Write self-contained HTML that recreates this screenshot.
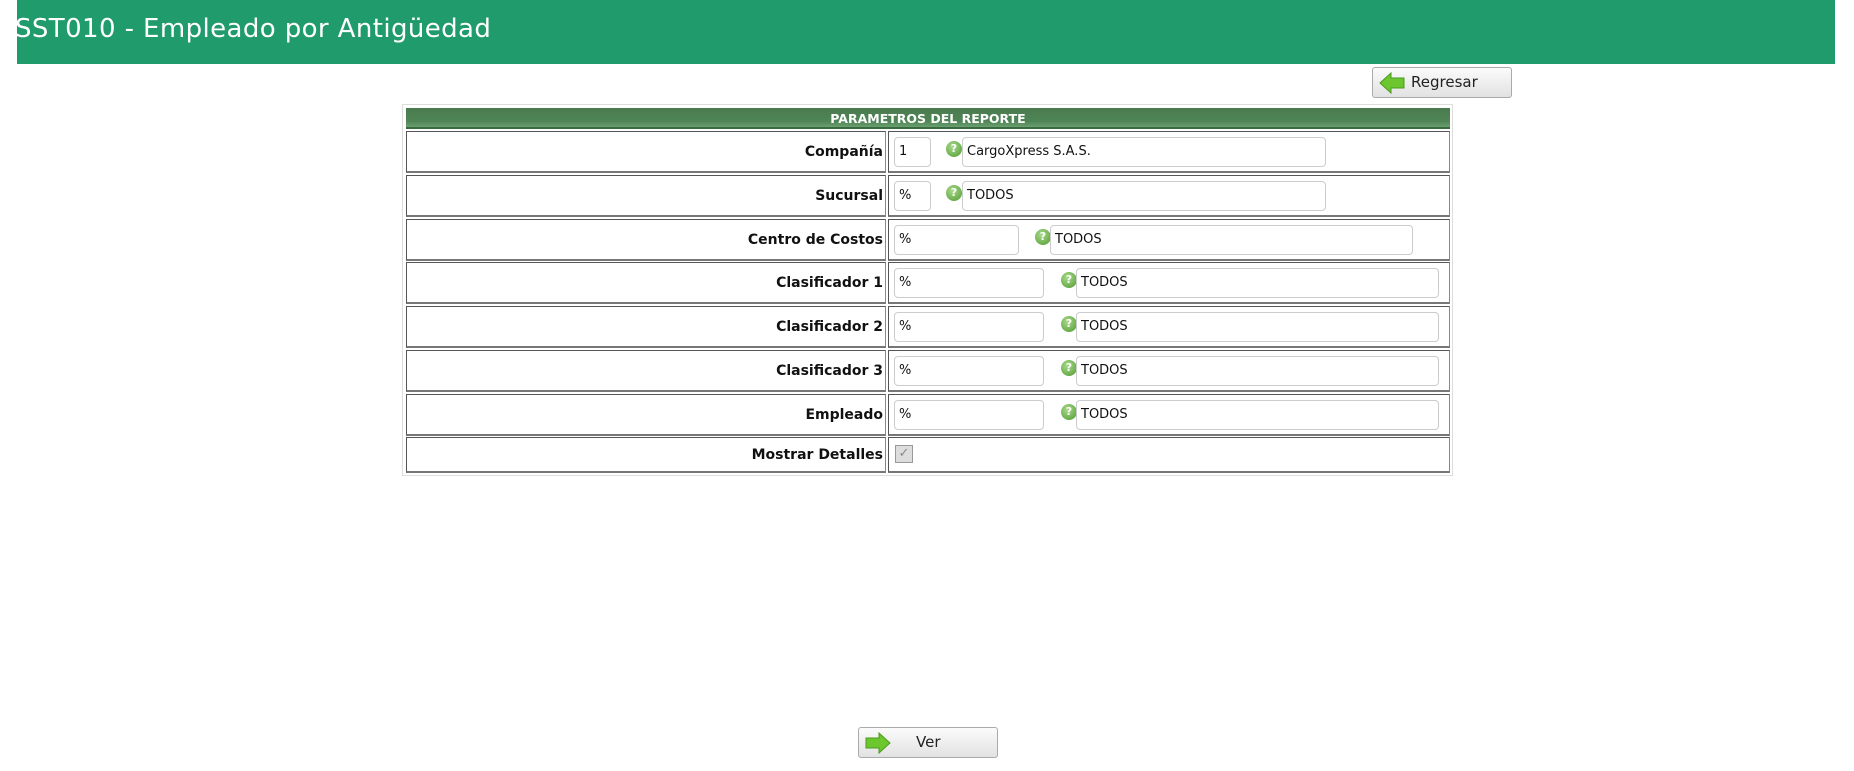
<!DOCTYPE html>
<html><head><meta charset="utf-8"><style>
*{box-sizing:border-box;margin:0;padding:0}
body{width:1854px;height:771px;background:#fff;font-family:"DejaVu Sans","Liberation Sans",sans-serif;position:relative;overflow:hidden}
.hdr{position:absolute;left:17px;top:0;width:1818px;height:64px;background:#1f9b6c}
.hdr span{position:absolute;left:-2px;top:14px;color:#fff;font-size:26px;letter-spacing:0.4px}
.btn{position:absolute;height:31px;border:1px solid #aaa;border-radius:3px;background:linear-gradient(#fbfbfb,#e2e2e2);font-size:15px;color:#222}
.btn svg{position:absolute;left:6px;top:4px}
.outer{position:absolute;left:402px;top:104px;width:1051px;height:372px;border:1px solid #ddd}
.band{position:absolute;left:406px;top:108px;width:1044px;height:21px;background:linear-gradient(#4a7a4f,#4f8556 70%,#6aa070);color:#fff;font-weight:bold;font-size:12.5px;text-align:center;line-height:21px;border-bottom:2px solid #3a6a40}
.c{position:absolute;border:1px solid #555;border-right-color:#888;border-bottom:2px solid #777}
.lab{font-weight:bold;font-size:14px;text-align:right;padding-right:2px;color:#111}
.in{position:absolute;height:30px;border:1px solid #ccc;border-radius:4px;background:#fff;font-size:13px;padding-left:4px;line-height:28px;color:#111}
.q{position:absolute;width:16px;height:16px;border-radius:50%;background:radial-gradient(circle at 40% 35%,#a9d98a,#4e9a30);color:#fff;font-size:11px;font-weight:bold;text-align:center;line-height:16px}
.chk{position:absolute;left:895px;top:445px;width:18px;height:18px;border:1px solid #999;background:#ddd;font-size:13px;color:#888;text-align:center;line-height:16px}
</style></head><body>
<div class="hdr"><span>SST010 - Empleado por Antigüedad</span></div>
<div class="btn" style="left:1372px;top:67px;width:140px"><svg width="26" height="22" viewBox="0 0 26 22"><path d="M1 11L12 1V6H25V16H12V21Z" fill="#6cc62e" stroke="#4a9a1e" stroke-width="1"/></svg><span style="position:absolute;left:38px;top:5px">Regresar</span></div>
<div class="outer"></div>
<div class="band">PARAMETROS DEL REPORTE</div>
<div id="rows"></div>
<script>
var rows=[["Compañía","1","CargoXpress S.A.S.",37,962,364,946],["Sucursal","%","TODOS",37,962,364,946],["Centro de Costos","%","TODOS",125,1050,363,1035],["Clasificador 1","%","TODOS",150,1076,363,1061],["Clasificador 2","%","TODOS",150,1076,363,1061],["Clasificador 3","%","TODOS",150,1076,363,1061],["Empleado","%","TODOS",150,1076,363,1061]];
var tops=[131,175,219,262,306,350,394];var h='';
rows.forEach(function(r,i){var t=tops[i];
h+='<div class="c lab" style="left:406px;top:'+t+'px;width:480px;height:42px;line-height:40px">'+r[0]+'</div>';
h+='<div class="c" style="left:888px;top:'+t+'px;width:562px;height:42px"></div>';
h+='<div class="in" style="left:894px;top:'+(t+6)+'px;width:'+r[3]+'px">'+r[1]+'</div>';
h+='<div class="q" style="left:'+r[6]+'px;top:'+(t+10)+'px">?</div>';
h+='<div class="in" style="left:'+r[4]+'px;top:'+(t+6)+'px;width:'+r[5]+'px">'+r[2]+'</div>';});
h+='<div class="c lab" style="left:406px;top:437px;width:480px;height:36px;line-height:34px">Mostrar Detalles</div>';
h+='<div class="c" style="left:888px;top:437px;width:562px;height:36px"></div>';
document.getElementById('rows').innerHTML=h;
</script>
<div class="chk">✓</div>
<div class="btn" style="left:858px;top:727px;width:140px"><svg width="26" height="22" viewBox="0 0 26 22"><path d="M25 11L14 1V6H1V16H14V21Z" fill="#6cc62e" stroke="#4a9a1e" stroke-width="1"/></svg><span style="position:absolute;left:57px;top:5px">Ver</span></div>
</body></html>
